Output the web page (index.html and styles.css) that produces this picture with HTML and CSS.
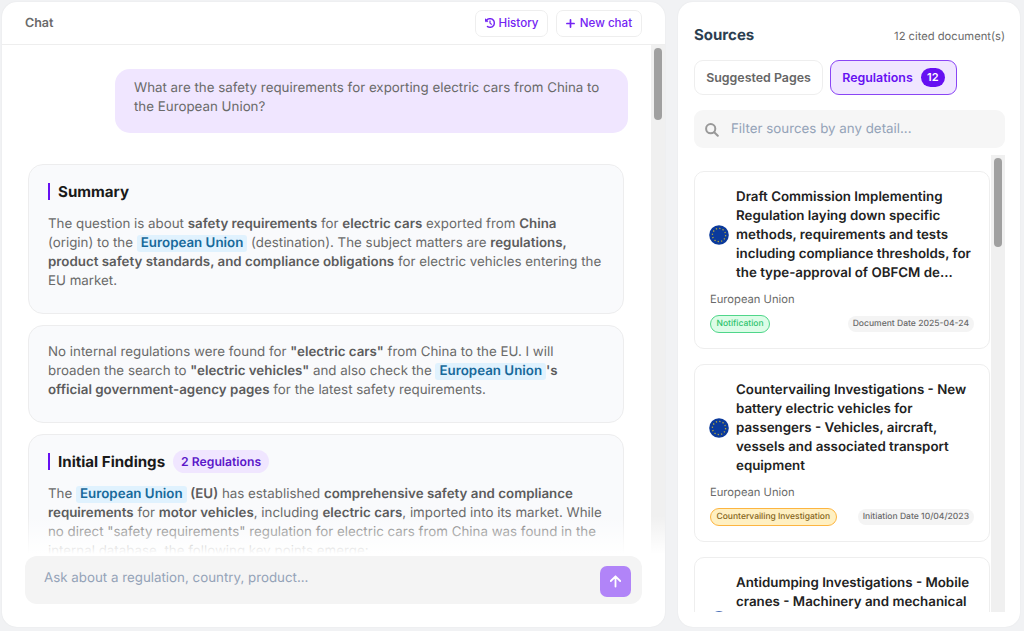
FILE: index.html
```html
<!DOCTYPE html>
<html lang="en">
<head>
    <meta charset="UTF-8">
    <meta name="viewport" content="width=device-width, initial-scale=1.0">
    <title>Chat</title>
    <link rel="stylesheet" href="styles.css">
</head>
<body>
    <svg class="defs" width="0" height="0">
        <symbol id="eu-flag" viewBox="0 0 20 20">
            <circle cx="10" cy="10" r="9.8" fill="#0b3a9b"/>
            <circle cx="10" cy="10" r="6.6" fill="none" stroke="#b5a73c" stroke-width="1.3" stroke-dasharray="1.3 2.156"/>
        </symbol>
    </svg>

    <main class="chat">
        <header class="chat-header">
            <h1>Chat</h1>
            <div class="chat-actions">
                <button class="action history">
                    <svg width="10" height="10" viewBox="0 0 512 512" fill="currentColor" stroke="currentColor" stroke-width="14"><path d="M75 75L41 41C26 26 0 37 0 58V168c0 13 11 24 24 24H134c21 0 32-26 17-41l-30-31C155 85 203 64 256 64c106 0 192 86 192 192s-86 192-192 192c-41 0-79-13-110-35-15-10-35-6-45 8s-6 35 8 45C151 495 202 512 256 512c141 0 256-115 256-256S397 0 256 0C185 0 121 29 75 75zM256 128c-13 0-24 11-24 24V256c0 6 3 12 7 17l72 72c9 9 25 9 34 0s9-25 0-34l-65-65V152c0-13-11-24-24-24z"/></svg>
                    <span>History</span>
                </button>
                <button class="action new-chat">
                    <svg width="9" height="9" viewBox="0 0 9 9" fill="none" stroke="currentColor" stroke-width="1.7" stroke-linecap="round"><path d="M4.5 .9V8.1M.9 4.5H8.1"/></svg>
                    <span>New chat</span>
                </button>
            </div>
        </header>

        <div class="chat-body">
            <div class="messages">
                <div class="question">What are the safety requirements for exporting electric cars from China to<br>the European Union?</div>

                <section class="answer">
                    <h2>Summary</h2>
                    <p>The question is about <b>safety requirements</b> for <b>electric cars</b> exported from <b>China</b><br>
                    (origin) to the <mark>European Union</mark> (destination). The subject matters are <b>regulations,</b><br>
                    <b>product safety standards, and compliance obligations</b> for electric vehicles entering the<br>
                    EU market.</p>
                </section>

                <section class="answer">
                    <p>No internal regulations were found for <b>"electric cars"</b> from China to the EU. I will<br>
                    broaden the search to <b>"electric vehicles"</b> and also check the <mark>European Union</mark><b>'s</b><br>
                    <b>official government-agency pages</b> for the latest safety requirements.</p>
                </section>

                <section class="answer">
                    <h2>Initial Findings <span class="count">2 Regulations</span></h2>
                    <p>The <mark>European Union</mark> <b>(EU)</b> has established <b>comprehensive safety and compliance</b><br>
                    <b>requirements</b> for <b>motor vehicles</b>, including <b>electric cars</b>, imported into its market. While<br>
                    no direct "safety requirements" regulation for electric cars from China was found in the<br>
                    internal database, the following key points emerge:</p>
                </section>
            </div>
            <div class="scrollbar"><div class="thumb"></div></div>
            <div class="fade"></div>
        </div>

        <footer class="composer">
            <div class="composer-box">
                <span>Ask about a regulation, country, product...</span>
                <button class="send">
                    <svg width="13" height="13" viewBox="0 0 13 13" fill="none" stroke="#fff" stroke-width="1.8" stroke-linecap="round" stroke-linejoin="round"><path d="M6.5 11.6V1.6M1.8 6L6.5 1.3L11.2 6"/></svg>
                </button>
            </div>
        </footer>
    </main>

    <aside class="sources">
        <div class="sources-header">
            <h2>Sources</h2>
            <span>12 cited document(s)</span>
        </div>
        <div class="tabs">
            <button class="tab pages">Suggested Pages</button>
            <button class="tab active">Regulations <span class="badge">12</span></button>
        </div>
        <div class="filter">
            <svg width="14" height="14" viewBox="0 0 14 14" fill="none" stroke="#999" stroke-width="2" stroke-linecap="round"><circle cx="5.7" cy="5.7" r="4.6"/><path d="M9.2 9.2L12.8 12.8"/></svg>
            <span>Filter sources by any detail...</span>
        </div>

        <div class="source-area">
            <div class="source-list">
                <article class="source">
                    <div class="source-title">
                        <svg class="flag"><use href="#eu-flag"/></svg>
                        <h3>Draft Commission Implementing<br>Regulation laying down specific<br>methods, requirements and tests<br>including compliance thresholds, for<br>the type-approval of OBFCM de...</h3>
                    </div>
                    <p>European Union</p>
                    <div class="source-meta">
                        <span class="tag green">Notification</span>
                        <span class="date">Document Date 2025-04-24</span>
                    </div>
                </article>
                <article class="source">
                    <div class="source-title">
                        <svg class="flag"><use href="#eu-flag"/></svg>
                        <h3>Countervailing Investigations - New<br>battery electric vehicles for<br>passengers - Vehicles, aircraft,<br>vessels and associated transport<br>equipment</h3>
                    </div>
                    <p>European Union</p>
                    <div class="source-meta">
                        <span class="tag amber">Countervailing Investigation</span>
                        <span class="date">Initiation Date 10/04/2023</span>
                    </div>
                </article>
                <article class="source">
                    <div class="source-title last">
                        <svg class="flag"><use href="#eu-flag"/></svg>
                        <h3>Antidumping Investigations - Mobile<br>cranes - Machinery and mechanical</h3>
                    </div>
                </article>
            </div>
            <div class="scrollbar"><div class="thumb"></div></div>
        </div>
    </aside>
</body>
</html>
```

FILE: styles.css
```css
* {
    box-sizing: border-box;
}
body {
    margin: 0;
    padding: 2px 4px 4px 2px;
    height: 631px;
    display: flex;
    gap: 13px;
    overflow: hidden;
    background: #f1f2f4;
    color: #6a6a6a;
    font-family: Inter, "Liberation Sans", sans-serif;
    font-size: 13.33px;
    line-height: 19px;
    white-space: nowrap;
    text-rendering: geometricPrecision;
}
h1, h2, h3, p {
    margin: 0;
}
b {
    font-weight: 600;
    color: #5c5c5c;
}
button {
    font-family: inherit;
    background: #fff;
    border: 1px solid #eee;
    padding: 0;
}
.defs {
    position: absolute;
}
.chat, .sources {
    background: #fff;
    border-radius: 15px;
    box-shadow: 0 0 2px rgba(0, 0, 0, 0.06);
    overflow: hidden;
}
.chat {
    width: 663px;
    display: flex;
    flex-direction: column;
}
.chat-header {
    height: 43px;
    flex: none;
    display: flex;
    align-items: center;
    justify-content: space-between;
    padding: 0 23px;
    border-bottom: 1px solid #eee;
}
.chat-header h1 {
    font-size: 12.5px;
    font-weight: 600;
}
.chat-actions {
    display: flex;
    gap: 8px;
}
.action {
    height: 27px;
    border-radius: 7px;
    color: #7424f3;
    font-size: 11.6px;
    font-weight: 500;
    display: flex;
    align-items: center;
    justify-content: center;
    gap: 4px;
}
.history {
    width: 73px;
}
.new-chat {
    width: 86px;
    gap: 5px;
}

.chat-body {
    position: relative;
    height: 509px;
    display: flex;
    overflow: hidden;
}
.messages {
    flex: 1;
    min-width: 0;
    padding: 24px 0 0 26px;
}
.question {
    width: 513px;
    height: 64px;
    margin: 0 0 31px 87px;
    padding: 10px 19px;
    border-radius: 15px;
    background: #f0e6ff;
}
.answer {
    margin-bottom: 11px;
    padding: 17px 19px 22px;
    width: 596px;
    border: 1px solid #ededee;
    border-radius: 15px;
    background: #f9fafc;
}
.answer h2 {
    display: flex;
    align-items: center;
    height: 18px;
    margin-bottom: 15px;
    color: #1a1a1a;
    font-size: 15.1px;
    font-weight: 700;
}
.answer h2::before {
    content: "";
    width: 2px;
    height: 17px;
    margin-right: 8px;
    background: #6610f2;
}
.count {
    margin-left: 8px;
    padding: 2px 8px;
    border-radius: 12px;
    background: #f0e6ff;
    color: #5b17c9;
    font-size: 12.2px;
    font-weight: 600;
}
mark {
    padding: 0 4px 1px;
    border-radius: 3px;
    background: #e0f2fe;
    color: #17699b;
    font-weight: 600;
}
.scrollbar {
    flex: none;
    width: 14px;
    padding: 3px;
    background: #f0f0f0;
}
.thumb {
    width: 8px;
    height: 72px;
    border-radius: 4px;
    background: #a0a0a0;
}
/* covers the end of the conversation above the input */
.fade {
    position: absolute;
    left: 0;
    right: 0;
    bottom: 0;
    height: 38px;
    background: linear-gradient(rgba(255, 255, 255, 0), rgba(255, 255, 255, 0.9) 90%, #fff);
}
.composer {
    padding: 2px 23px 0;
}
.composer-box {
    height: 48px;
    padding: 10px 11px 7px 19px;
    display: flex;
    justify-content: space-between;
    border-radius: 12px;
    background: #f4f4f4;
    color: #94a3b8;
}
.composer-box span {
    margin-top: 3px;
}
.send {
    width: 31px;
    height: 31px;
    border: none;
    border-radius: 7px;
    background: #b184f8;
    display: flex;
    align-items: center;
    justify-content: center;
}

.sources {
    width: 342px;
    padding: 22px 15px 15px 16px;
    display: flex;
    flex-direction: column;
}
.sources-header {
    display: flex;
    align-items: center;
    justify-content: space-between;
    height: 21px;
    margin-bottom: 15px;
    font-size: 11.2px;
}
.sources-header h2 {
    color: #2c3e50;
    font-size: 15px;
    font-weight: 700;
}
.sources-header span {
    margin-top: 3px;
}
.tabs {
    display: flex;
    gap: 7px;
    margin-bottom: 15px;
}
.tab {
    display: flex;
    align-items: center;
    justify-content: center;
    gap: 8px;
    width: 127px;
    height: 35px;
    border-radius: 9px;
    color: #666;
    font-size: 12.4px;
    font-weight: 600;
}
.pages {
    width: 129px;
}
.tab.active {
    border-color: #8a45f5;
    background: #f0e6ff;
    color: #6610f2;
}
.badge {
    width: 24px;
    height: 19px;
    border-radius: 10px;
    background: #6610f2;
    color: #fff;
    font-size: 11px;
    line-height: 19px;
}
.filter {
    flex: none;
    display: flex;
    align-items: center;
    gap: 12px;
    height: 38px;
    padding: 1px 11px 0;
    border-radius: 9px;
    background: #f6f6f6;
    color: #94a3b8;
}
.source-area {
    display: flex;
    height: 457px;
    margin-top: 7px;
    overflow: hidden;
}
.source-area .thumb {
    height: 89px;
}
.source-list {
    width: 297px;
    padding-top: 16px;
}
.source {
    width: 296px;
    height: 178px;
    margin-bottom: 15px;
    padding: 16px 15px 14px;
    border: 1px solid #eee;
    border-radius: 10px;
}
.source-title {
    display: flex;
    align-items: center;
    gap: 7px;
    margin-bottom: 7px;
}
.source-title.last {
    height: 95px;
    align-items: flex-start;
}
.flag {
    flex: none;
    width: 20px;
    height: 20px;
    margin: 0 0 1px -1px;
}
.last .flag {
    margin-top: 37px;
}
.source h3 {
    color: #222;
    font-size: 13.33px;
    font-weight: 600;
}
.source p {
    font-size: 11.2px;
    line-height: 18px;
    margin-bottom: 7px;
}
.source-meta {
    display: flex;
    align-items: center;
    justify-content: space-between;
    font-size: 8.55px;
    font-weight: 500;
}
.tag {
    padding: 0 5.5px;
    border: 1px solid;
    border-radius: 9px;
    font-size: 8.5px;
    line-height: 16px;
}
.green {
    border-color: #4fd68a;
    background: #dcfce7;
    color: #2fc46d;
}
.amber {
    border-color: #fdb540;
    background: #fff0c2;
    color: #85651b;
}
.date {
    padding: 0 5px;
    border-radius: 8px;
    background: #f4f4f4;
    line-height: 16px;
}
```
